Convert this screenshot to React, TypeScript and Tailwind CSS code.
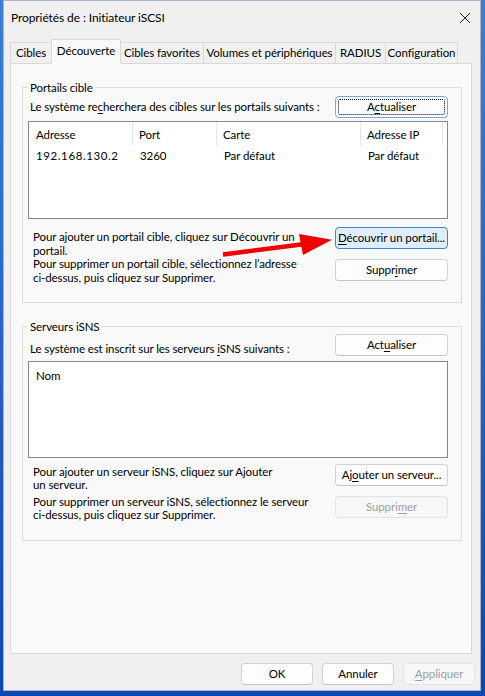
import React from 'react';

const Btn = ({ children, disabled, primary, focus, className = '' }: { children: React.ReactNode; disabled?: boolean; primary?: boolean; focus?: boolean; className?: string }) => (
  <div
    className={
      'relative h-[22px] shrink-0 flex items-center justify-center rounded-[4px] border leading-none whitespace-nowrap ' +
      (disabled
        ? 'border-[#e3e3e3] bg-[#f7f7f7] text-[#a0a0a0] '
        : primary
        ? 'border-[#3a86d6] bg-[#e1eefa] text-black '
        : focus
        ? 'border-[#7aa7d8] bg-[#fdfdfd] text-black '
        : 'border-[#d3d3d3] border-b-[#c4c4c4] bg-[#fdfdfd] text-black ') +
      className
    }
  >
    {focus && <div className="absolute inset-[2px] border border-dotted border-black rounded-[2px]" />}
    <span className="relative">{children}</span>
  </div>
);

const U = ({ children }: { children: React.ReactNode }) => <span className="underline underline-offset-[2px]">{children}</span>;

const tabs = [
  { label: 'Cibles', w: 'w-[42px]' },
  { label: 'Découverte', w: 'w-[70px]', active: true },
  { label: 'Cibles favorites', w: 'w-[84px]' },
  { label: 'Volumes et périphériques', w: 'w-[133px]' },
  { label: 'RADIUS', w: 'w-[51px]' },
  { label: 'Configuration', w: 'w-[73px]' },
];

export default function App() {
  return (
    <div className="w-[485px] h-[696px] bg-gradient-to-b from-[#3b7fd6] to-[#0b47b4] pl-[3px] pr-[4px] pb-[5px] font-['Lato','Liberation_Sans',Arial,sans-serif] text-[11.5px] tracking-[-0.1px] text-black">
      <div className="h-full bg-[#f0f0f0] border border-[#a9b4c4] flex flex-col">
        {/* title bar */}
        <div className="h-[38px] shrink-0 flex items-center justify-between pl-[7px] pr-[8px] pb-[4px]">
          <span className="text-[12px]">Propriétés de : Initiateur iSCSI</span>
          <svg width="12" height="12" viewBox="0 0 12 12" className="mr-[1px]">
            <path d="M1 1 L11 11 M11 1 L1 11" stroke="#222" strokeWidth="1" />
          </svg>
        </div>

        {/* tabs */}
        <div className="flex items-end h-[24px] ml-[6px] relative z-10">
          {tabs.map(t => (
            <div
              key={t.label}
              className={
                'flex items-center justify-center border border-[#d9d9d9] -ml-px first:ml-0 whitespace-nowrap ' +
                t.w +
                (t.active ? ' h-[25px] bg-[#f9f9f9] border-b-[#f9f9f9] mb-[-1px] pb-[2px]' : ' h-[21px] bg-[#f0f0f0] border-b-0')
              }
            >
              {t.label}
            </div>
          ))}
        </div>

        {/* panel */}
        <div className="relative ml-[6px] w-[462px] h-[591px] bg-[#f9f9f9] border border-[#d9d9d9] pl-[11px] whitespace-nowrap">
          <fieldset className="mt-[16px] w-[440px] border border-[#dcdcdc] pl-[5px] pr-[13px] pb-[17px]">
            <legend className="ml-0 px-[2px] leading-[15px]">Portails cible</legend>
            <div className="flex items-center justify-between mt-px">
              <span className="ml-[2px]">Le système re<U>c</U>herchera des cibles sur les portails suivants :</span>
              <Btn focus className="w-[113px]"><>A<U>c</U>tualiser</></Btn>
            </div>
            <div className="mt-[3px] h-[98px] bg-white border border-[#828790]">
              <div className="flex h-[24px]">
                <div className="w-[104px] pl-[7px] pt-[4px] border-r border-[#e5e5e5]">Adresse</div>
                <div className="w-[84px] pl-[6px] pt-[4px] border-r border-[#e5e5e5]">Port</div>
                <div className="w-[144px] pl-[6px] pt-[4px] border-r border-[#e5e5e5]">Carte</div>
                <div className="w-[82px] pl-[6px] pt-[4px] border-r border-[#e5e5e5]">Adresse IP</div>
              </div>
              <div className="flex h-[20px] items-center">
                <div className="w-[104px] pl-[7px] tracking-[0.6px]">192.168.130.2</div>
                <div className="w-[84px] pl-[7px]">3260</div>
                <div className="w-[144px] pl-[7px]">Par défaut</div>
                <div className="w-[82px] pl-[7px]">Par défaut</div>
              </div>
            </div>
            <div className="flex justify-between mt-[8px]">
              <div className="ml-[5px] mt-[3px] leading-[13.7px]">
                <p>Pour ajouter un portail cible, cliquez sur Découvrir un<br />portail.</p>
                <p>Pour supprimer un portail cible, sélectionnez l’adresse<br />ci-dessus, puis cliquez sur Supprimer.</p>
              </div>
              <div className="flex flex-col gap-[10px]">
                <Btn primary className="w-[113px]"><><U>D</U>écouvrir un portail...</></Btn>
                <Btn className="w-[113px]"><>Suppr<U>i</U>mer</></Btn>
              </div>
            </div>
          </fieldset>

          <fieldset className="mt-[16px] w-[440px] border border-[#dcdcdc] pl-[5px] pr-[13px] pb-[18px]">
            <legend className="ml-0 px-[2px] leading-[15px]">Serveurs iSNS</legend>
            <div className="flex items-end justify-between">
              <span className="ml-[2px] mb-[-1px]">Le système est inscrit sur les serveurs <U>i</U>SNS suivants :</span>
              <Btn className="w-[113px]"><>Act<U>u</U>aliser</></Btn>
            </div>
            <div className="mt-[5px] h-[97px] bg-white border border-[#828790]">
              <div className="pl-[7px] pt-[5px]">Nom</div>
            </div>
            <div className="flex justify-between mt-[6px]">
              <p className="ml-[5px] mt-[1px] leading-[13.5px]">Pour ajouter un serveur iSNS, cliquez sur Ajouter<br />un serveur.</p>
              <Btn className="w-[113px]"><>Aj<U>o</U>uter un serveur...</></Btn>
            </div>
            <div className="flex justify-between mt-[4px]">
              <p className="ml-[5px] mt-[-1px] leading-[13.5px]">Pour supprimer un serveur iSNS, sélectionnez le serveur<br />ci-dessus, puis cliquez sur Supprimer.</p>
              <Btn disabled className="w-[113px]"><>Suppri<U>m</U>er</></Btn>
            </div>
          </fieldset>

          {/* red annotation arrow */}
          <svg className="absolute left-0 top-0 pointer-events-none" width="462" height="300" viewBox="0 0 462 300">
            <g transform="translate(-10 -62)">
              <line x1="222" y1="252.5" x2="302" y2="242.3" stroke="#f20000" strokeWidth="4.5" />
              <polygon points="298,232 331,237.8 302,253" fill="#f20000" />
            </g>
          </svg>
        </div>

        {/* bottom buttons */}
        <div className="flex justify-end gap-[9px] pr-[5px] mt-[9px]">
          <Btn className="w-[72px]">OK</Btn>
          <Btn className="w-[72px]">Annuler</Btn>
          <Btn disabled className="w-[72px]"><><U>A</U>ppliquer</></Btn>
        </div>
      </div>
    </div>
  );
}
